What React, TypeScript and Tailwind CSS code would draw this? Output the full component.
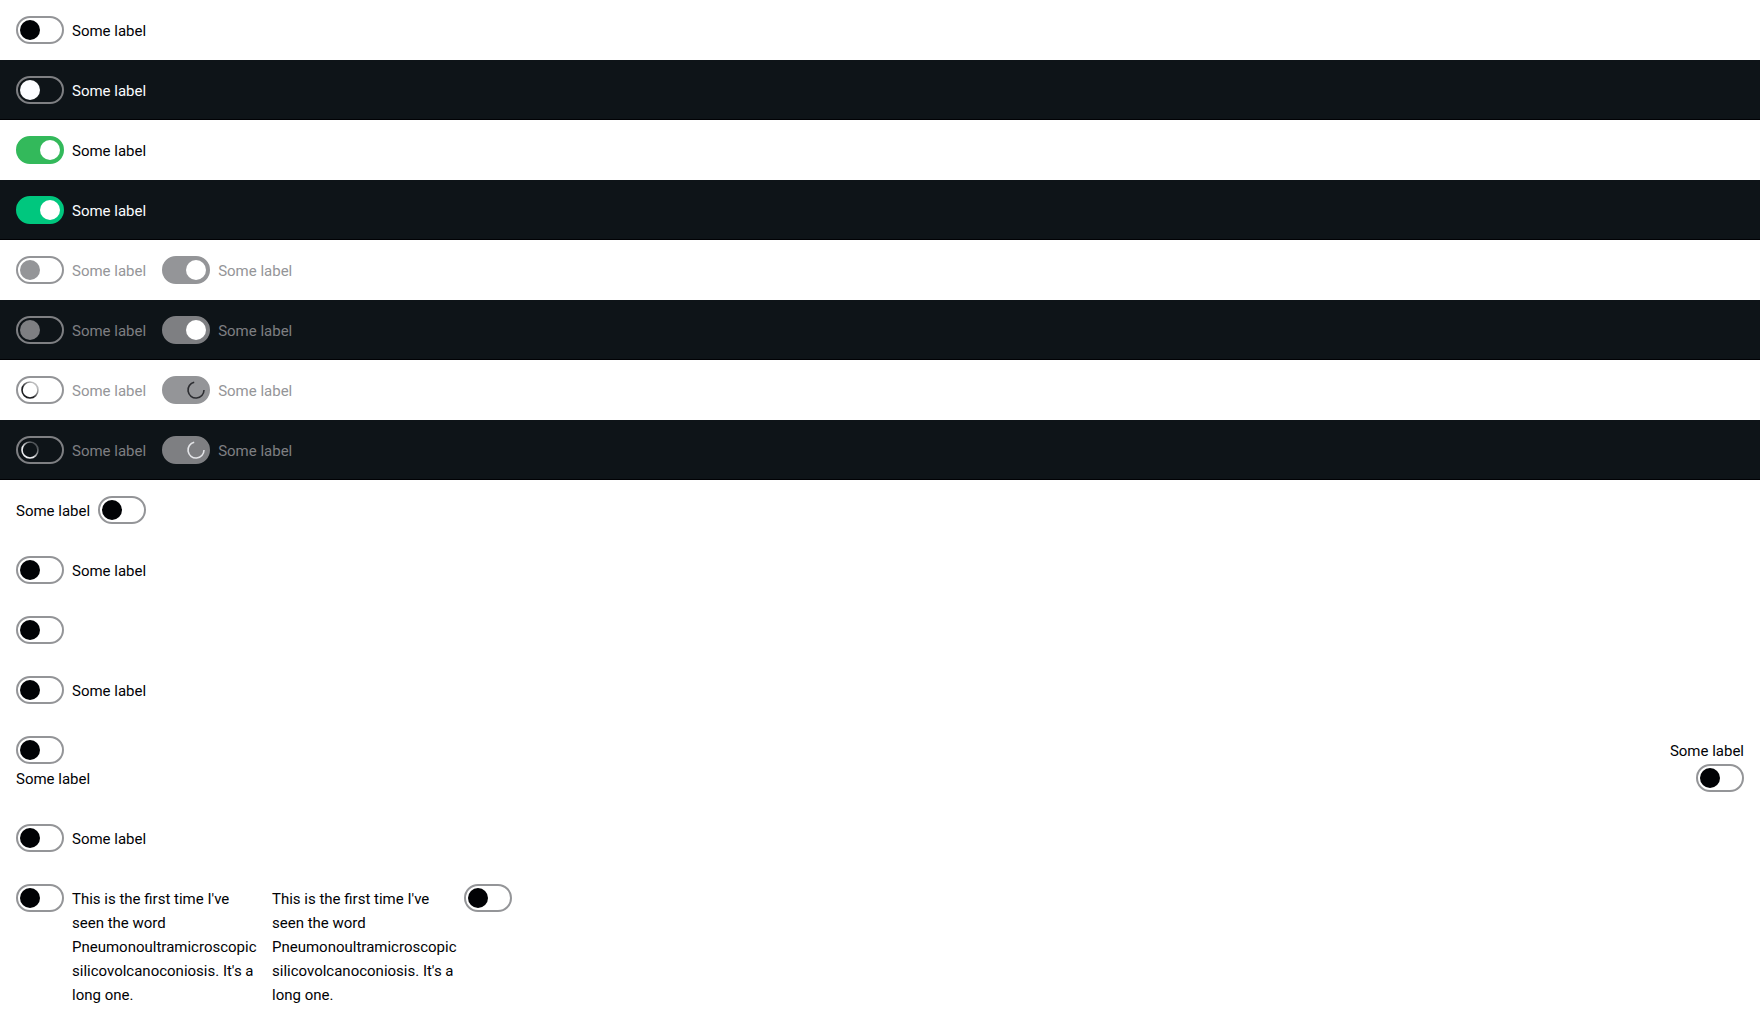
import { useId } from "react";
import type { ReactNode } from "react";

type Theme = "light" | "dark";

type SwitchProps = {
  label?: string;
  theme?: Theme;
  checked?: boolean;
  disabled?: boolean;
  loading?: boolean;
  layout?: string;
  labelClassName?: string;
  align?: "start" | "end";
  hideLabel?: boolean;
};

const LONG_LABEL =
  "This is the first time I've seen the word Pneumonoultramicroscopicsilicovolcanoconiosis. It's a long one.";

function Spinner({ theme, id }: { theme: Theme; id: string }) {
  const color = theme === "dark" ? "#eeeff2" : "#1c1d20";
  return (
    <svg viewBox="0 0 20 20" className="size-5" fill="none" strokeWidth="1.6" aria-hidden="true">
      <defs>
        <linearGradient id={id} x1="0" y1="1" x2="1" y2="0">
          <stop offset="0.35" stopColor={color} />
          <stop offset="0.8" stopColor={color} stopOpacity="0.3" />
        </linearGradient>
      </defs>
      <circle cx="10" cy="10" r="8" stroke={`url(#${id})`} />
    </svg>
  );
}

function ArcSpinner({ theme }: { theme: Theme }) {
  return (
    <svg
      viewBox="0 0 20 20"
      className="size-5"
      fill="none"
      stroke={theme === "dark" ? "#e4e5e8" : "#2c2d31"}
      strokeWidth="1.6"
      aria-hidden="true"
    >
      <path d="M8.2 2.2A8 8 0 1 0 18 10" />
    </svg>
  );
}

function Switch({
  label = "Some label",
  theme = "light",
  checked = false,
  disabled = false,
  loading = false,
  layout = "items-start",
  labelClassName = "",
  align = "end",
  hideLabel = false,
}: SwitchProps) {
  const id = useId();
  const dark = theme === "dark";
  const inactive = disabled || loading;

  const border = dark ? "border-[#7e7f82]" : "border-[#949598]";
  const mutedFill = dark ? "bg-[#7e7f82]" : "bg-[#949598]";
  const trackOn = inactive
    ? `${border} ${mutedFill}`
    : dark
      ? "border-[#00c77e] bg-[#00c77e]"
      : "border-[#33b95b] bg-[#33b95b]";
  const track = checked ? trackOn : border;
  const thumb = checked
    ? "bg-white"
    : inactive
      ? mutedFill
      : dark
        ? "bg-[#fbfcff]"
        : "bg-[#010205]";
  const text = inactive
    ? dark
      ? "text-[#7e7f82]"
      : "text-[#949598]"
    : dark
      ? "text-[#fbfcff]"
      : "text-[#010205]";

  const button = (
    <button
      id={id}
      type="button"
      role="switch"
      aria-checked={checked}
      aria-busy={loading}
      aria-label={hideLabel ? label : undefined}
      disabled={inactive}
      className={`flex h-7 w-12 shrink-0 items-center rounded-full border-2 px-0.5 ${track} ${checked ? "justify-end" : "justify-start"}`}
    >
      {loading ? (
        checked ? (
          <ArcSpinner theme={theme} />
        ) : (
          <Spinner theme={theme} id={`${id}-g`} />
        )
      ) : (
        <span className={`size-5 rounded-full ${thumb}`} />
      )}
    </button>
  );
  const caption = hideLabel ? null : (
    <label htmlFor={id} className={`pt-[3px] pb-px ${text} ${labelClassName}`}>
      {label === LONG_LABEL ? (
        <>
          This is the first time I've seen the word Pneumonoultramicroscopic
          <wbr />
          silicovolcanoconiosis. It's a long one.
        </>
      ) : (
        label
      )}
    </label>
  );

  return (
    <div className={`flex gap-x-2 ${layout}`}>
      {align === "start" ? caption : button}
      {align === "start" ? button : caption}
    </div>
  );
}

function Row({ theme = "light", children }: { theme?: Theme; children: ReactNode }) {
  return (
    <section
      className={`flex gap-4 p-4 ${theme === "dark" ? "bg-[#0e1418] shadow-[inset_0_-1px_0_#010205]" : "bg-white"}`}
    >
      {children}
    </section>
  );
}

const themes: Theme[] = ["light", "dark"];

export default function App() {
  return (
    <main className="bg-white font-['Roboto',sans-serif] text-[15px]/6">
      {themes.map((theme) => (
        <Row key={theme} theme={theme}>
          <Switch theme={theme} />
        </Row>
      ))}
      {themes.map((theme) => (
        <Row key={theme} theme={theme}>
          <Switch theme={theme} checked />
        </Row>
      ))}
      {themes.map((theme) => (
        <Row key={theme} theme={theme}>
          <Switch theme={theme} disabled />
          <Switch theme={theme} disabled checked />
        </Row>
      ))}
      {themes.map((theme) => (
        <Row key={theme} theme={theme}>
          <Switch theme={theme} loading />
          <Switch theme={theme} loading checked />
        </Row>
      ))}
      <Row>
        <Switch align="start" />
      </Row>
      <Row>
        <Switch />
      </Row>
      <Row>
        <Switch hideLabel />
      </Row>
      <Row>
        <Switch />
      </Row>
      <section className="flex justify-between p-4">
        <Switch layout="flex-col items-start" />
        <Switch align="start" layout="flex-col items-end" />
      </section>
      <Row>
        <Switch />
      </Row>
      <Row>
        <Switch label={LONG_LABEL} layout="w-60 items-start" labelClassName="min-w-0 flex-1" />
        <Switch
          label={LONG_LABEL}
          align="start"
          layout="w-60 items-start"
          labelClassName="min-w-0 flex-1"
        />
      </Row>
    </main>
  );
}
